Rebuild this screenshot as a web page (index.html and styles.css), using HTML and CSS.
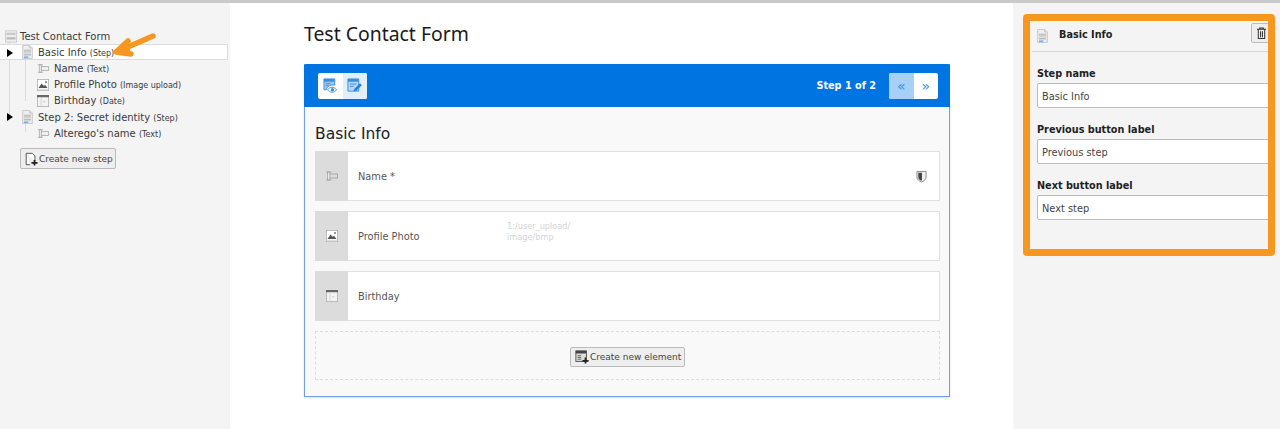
FILE: index.html
```html
<!DOCTYPE html>
<html lang="en">
<head>
<meta charset="utf-8">
<title>Test Contact Form</title>
<link rel="stylesheet" href="styles.css">
</head>
<body>
<svg width="0" height="0" class="defs">
  <defs>
    <symbol id="i-page" viewBox="0 0 12 16">
      <path d="M.5.5h8l3 3v12H.5z" fill="#eee" stroke="#c4c4c4"/>
      <path d="M8.500.5v3h3" fill="#ddd" stroke="#c4c4c4"/>
      <path d="M2 6h8M2 8h8" stroke="#aaa"/>
      <rect x="2" y="10" width="8" height="2" fill="#bbb"/>
      <rect x="2" y="13" width="5" height="2" fill="#7fb2ea"/>
    </symbol>
    <symbol id="i-form" viewBox="0 0 16 16">
      <rect x=".5" y=".5" width="15" height="15" fill="#eee" stroke="#c4c4c4"/>
      <rect x="2" y="3" width="12" height="3" fill="#c8c8c8"/>
      <rect x="2" y="9" width="12" height="3" fill="#bbb"/>
    </symbol>
    <symbol id="i-text" viewBox="0 0 16 12">
      <path d="M5.500 3.500h10v5h-10" fill="none" stroke="#999"/>
      <rect x="3" y="1" width="3" height="10" fill="#e8e8e8" stroke="#999" stroke-width=".8"/>
      <path d="M1 1h7M1 11h7" stroke="#999" stroke-width=".8"/>
    </symbol>
    <symbol id="i-image" viewBox="0 0 16 16">
      <rect x=".5" y=".5" width="15" height="15" fill="#fff" stroke="#aaa"/>
      <path d="M2 12l4-6 3 3 2-1 3 4z" fill="#555"/>
      <circle cx="12" cy="4" r="1.300" fill="#777"/>
      <rect x="1" y="13" width="14" height="2" fill="#ddd"/>
    </symbol>
    <symbol id="i-date" viewBox="0 0 16 16">
      <rect x=".5" y=".5" width="15" height="15" fill="#f2f2f2" stroke="#aaa"/>
      <rect x="0" y="0" width="16" height="3" fill="#666"/>
      <path d="M5.500 4v11" stroke="#ccc"/>
      <path d="M8 9h3" stroke="#bbb"/>
    </symbol>
    <symbol id="i-add" viewBox="0 0 16 16">
      <path d="M2.500 1.500h7l3 3v6M7 14.500H2.500v-13" fill="#fff" stroke="#444"/>
      <path d="M12 9v6.500M8.500 12.500H15.500" stroke="#222" stroke-width="2"/>
    </symbol>
    <symbol id="i-addel" viewBox="0 0 16 16">
      <rect x="1" y="1" width="12" height="12" fill="#ddd" stroke="#444"/>
      <rect x="1" y="1" width="12" height="3" fill="#444"/>
      <path d="M3 6.500h4M3 8.500h4M3 10.500h4" stroke="#555"/>
      <path d="M12 8.500v7M8.500 12.500h7" stroke="#222" stroke-width="2"/>
    </symbol>
    <symbol id="i-view" viewBox="0 0 16 16">
      <path d="M1 1h11.500v6.500H9C6 8 4 10 3.500 12.500H1z" fill="#9cc8f2" stroke="#3b8fe0"/>
      <rect x="1" y="1" width="11.500" height="3" fill="#3b8fe0"/>
      <path d="M3 6h5M3 8h3" stroke="#3b8fe0"/>
      <path d="M5 12.500c2-3.500 7-3.500 9.500 0-2.500 3.500-7.500 3.500-9.500 0z" fill="#fff" stroke="#3b8fe0"/>
      <circle cx="10" cy="12.500" r="1.800" fill="#3b8fe0"/>
    </symbol>
    <symbol id="i-edit" viewBox="0 0 16 16">
      <path d="M1 1h11.500v13H1z" fill="#b5d6f5" stroke="#3b8fe0"/>
      <rect x="1" y="1" width="11.500" height="3" fill="#3b8fe0"/>
      <path d="M3 6.500h7M3 9h4" stroke="#3b8fe0"/>
      <path d="M7 14.500l.8-2.800 6-6 2 2-6 6z" fill="#1f7fdc"/>
    </symbol>
  </defs>
</svg>

<div class="page">
  <aside class="tree">
    <div class="tree-list">
      <span class="line line-root"></span>
      <span class="line line-a"></span>
      <span class="line line-b"></span>
      <div class="node root"><svg class="ic ic-root"><use href="#i-form"/></svg><span>Test Contact Form</span></div>
      <div class="node step selected"><span class="tri"></span><svg class="ic ic-page"><use href="#i-page"/></svg><span>Basic Info <small>(Step)</small></span></div>
      <div class="node child"><svg class="ic ic-text"><use href="#i-text"/></svg><span>Name <small>(Text)</small></span></div>
      <div class="node child"><svg class="ic ic-box"><use href="#i-image"/></svg><span>Profile Photo <small>(Image upload)</small></span></div>
      <div class="node child"><svg class="ic ic-box"><use href="#i-date"/></svg><span>Birthday <small>(Date)</small></span></div>
      <div class="node step"><span class="tri"></span><svg class="ic ic-page"><use href="#i-page"/></svg><span>Step 2: Secret identity <small>(Step)</small></span></div>
      <div class="node child"><svg class="ic ic-text"><use href="#i-text"/></svg><span>Alterego's name <small>(Text)</small></span></div>
    </div>
    <button class="btn btn-step" type="button"><svg class="btn-ic"><use href="#i-add"/></svg>Create new step</button>
    <svg class="arrow" viewBox="0 0 48 30" width="48" height="30">
      <path d="M41 5L9 19" stroke="#f6981f" stroke-width="5.500" stroke-linecap="round" fill="none"/>
      <path d="M16 10L4 21l15 2" stroke="#f6981f" stroke-width="5.500" stroke-linecap="round" stroke-linejoin="round" fill="#f6981f"/>
    </svg>
  </aside>

  <main class="center">
    <h1 class="title">Test Contact Form</h1>
    <section class="card">
      <header class="card-head">
        <div class="group">
          <span class="gbtn"><svg class="gic"><use href="#i-view"/></svg></span>
          <span class="gbtn on"><svg class="gic"><use href="#i-edit"/></svg></span>
        </div>
        <div class="pager">
          <span class="step-count">Step 1 of 2</span>
          <div class="group">
            <span class="gbtn active">«</span>
            <span class="gbtn">»</span>
          </div>
        </div>
      </header>
      <div class="card-body">
        <h2 class="step-title">Basic Info</h2>
        <div class="row">
          <div class="row-ic"><svg class="ric-text"><use href="#i-text"/></svg></div>
          <div class="row-label">Name *</div>
          <svg class="shield" viewBox="0 0 12 14" width="11" height="13"><path d="M1 1.500h10v6c0 3-2.500 4.500-5 5.500-2.500-1-5-2.500-5-5.500z" fill="#eee" stroke="#888"/><path d="M2.500 3h4v8l-1 .5c-1.500-.7-3-2-3-4z" fill="#444"/></svg>
        </div>
        <div class="row">
          <div class="row-ic"><svg class="ric-box"><use href="#i-image"/></svg></div>
          <div class="row-label">Profile Photo</div>
          <div class="row-meta">1:/user_upload/<br>image/bmp</div>
        </div>
        <div class="row">
          <div class="row-ic"><svg class="ric-box"><use href="#i-date"/></svg></div>
          <div class="row-label">Birthday</div>
        </div>
        <div class="drop">
          <button class="btn btn-el" type="button"><svg class="btn-ic"><use href="#i-addel"/></svg>Create new element</button>
        </div>
      </div>
    </section>
  </main>

  <aside class="side">
    <div class="inspector">
      <div class="insp-head">
        <svg class="insp-ic"><use href="#i-page"/></svg>
        <strong class="insp-title">Basic Info</strong>
        <span class="trash"><svg viewBox="0 0 12 14" width="11" height="14"><path d="M1 3h10M4 3V1.500h4V3M2.500 3v10h7V3M5 5v6.500M7 5v6.500" fill="none" stroke="#333" stroke-width="1.100"/></svg></span>
      </div>
      <div class="fields">
        <label class="field"><span class="field-label">Step name</span><span class="input">Basic Info</span></label>
        <label class="field"><span class="field-label">Previous button label</span><span class="input">Previous step</span></label>
        <label class="field"><span class="field-label">Next button label</span><span class="input">Next step</span></label>
      </div>
    </div>
  </aside>
</div>
</body>
</html>
```
FILE: styles.css
```css
* { box-sizing: border-box; }
html, body { margin: 0; height: 100%; }
body {
  font-family: "DejaVu Sans", Verdana, sans-serif;
  font-size: 9.8px;
  color: #333;
  background: #fff;
  overflow: hidden;
}
.defs { position: absolute; }
.page {
  display: flex;
  height: 429px;
  border-top: 3px solid #c9c9c9;
}

/* tree */
.tree {
  position: relative;
  width: 230px;
  flex: none;
  background: #f4f4f4;
  padding-top: 25px;
  font-size: 10px;
}
.tree-list { position: relative; }
.node {
  position: relative;
  display: flex;
  align-items: center;
  height: 16.2px;
  white-space: nowrap;
  color: #3a3a3a;
}
.node small { font-size: 8px; }
.root { padding-left: 5px; }
.ic-root { width: 12px; height: 13px; margin-right: 3px; }
.step { padding-left: 22px; }
.selected {
  background: #fff;
  border: 1px solid #dcdcdc;
  border-left: 0;
  width: 228px;
}
.tri {
  position: absolute;
  left: 7px;
  top: 4px;
  border-left: 6px solid #000;
  border-top: 4px solid transparent;
  border-bottom: 4px solid transparent;
}
.ic-page { width: 11px; height: 14px; margin-right: 5px; }
.child { padding-left: 37px; }
.ic-text { width: 12px; height: 9px; margin-right: 5px; }
.ic-box { width: 12px; height: 12px; margin-right: 5px; }
.line { position: absolute; background: #dcdcdc; width: 1px; }
.line-root { left: 9px; top: 12px; height: 78px; }
.line-a { left: 25px; top: 30px; height: 43px; }
.line-b { left: 25px; top: 94px; height: 10px; }
.btn {
  display: inline-flex;
  align-items: center;
  height: 21px;
  font: 400 9px "DejaVu Sans", sans-serif;
  color: #444;
  background: #eee;
  border: 1px solid #bbb;
  border-radius: 2px;
  padding: 0 3px;
  white-space: nowrap;
}
.btn-ic { flex: none; width: 14px; height: 14px; margin-right: 1px; }
.btn-step { margin: 7px 0 0 20px; width: 96px; }
.arrow { position: absolute; left: 112px; top: 28px; }

/* center */
.center {
  width: 783px;
  flex: none;
  padding: 0 63px 0 74px;
}
.title {
  margin: 0;
  padding-top: 17px;
  height: 61px;
  font: 400 19.4px/27px "Noto Sans", "Open Sans", sans-serif;
  color: #1a1a1a;
}
.card {
  height: 333px;
  border: 1px solid #6f9fe6;
  border-top: 0;
  background: #f9f9f9;
  box-shadow: 0 1px 2px rgba(0,0,0,.12);
}
.card-head {
  display: flex;
  align-items: center;
  justify-content: space-between;
  height: 43px;
  margin: 0 -1px;
  padding: 0 12px 0 14px;
  background: #0074e0;
  border-radius: 2px 2px 0 0;
}
.group {
  display: flex;
  width: 49px;
  height: 26px;
  background: #fff;
  border-radius: 2px;
  overflow: hidden;
}
.gbtn {
  flex: 1;
  display: flex;
  align-items: center;
  justify-content: center;
  color: #3b8fe0;
  font-size: 14px;
  line-height: 1;
}
.gbtn.on { background: #e3eef8; }
.gbtn.active { background: #a6d0f5; }
.gic { width: 15px; height: 15px; }
.pager { display: flex; align-items: center; gap: 13px; }
.step-count { color: #fff; font-weight: 700; font-size: 9.7px; }
.card-body { padding: 17px 9px 0 10px; }
.step-title {
  margin: 0 0 7px;
  font: 400 15.500px/20px "DejaVu Sans", sans-serif;
  color: #222;
}
.row {
  position: relative;
  display: flex;
  align-items: center;
  height: 50px;
  margin-bottom: 10px;
  background: #fff;
  border: 1px solid #e0e0e0;
  border-left: 0;
}
.row-ic {
  width: 33px;
  align-self: stretch;
  margin: -1px 0;
  background: #dcdcdc;
  display: flex;
  align-items: center;
  justify-content: center;
}
.ric-text { width: 13px; height: 10px; }
.ric-box { width: 12px; height: 12px; }
.row-label { margin-left: 10px; color: #555; width: 149px; }
.row-meta { font-size: 8.2px; line-height: 10.500px; color: #d4d4d4; margin-top: -9px; }
.shield { margin-left: auto; margin-right: 12px; }
.drop {
  display: flex;
  align-items: center;
  justify-content: center;
  height: 49px;
  border: 1px dashed #dcdcdc;
}
.btn-el { height: 20px; width: 115px; background: #eee; padding-left: 4px; margin-top: 3px; }

/* inspector */
.side {
  flex: 1;
  background: #f4f4f4;
  padding: 11px 5px 0 10px;
}
.inspector {
  height: 242px;
  border: 7px solid #f6981f;
  border-radius: 4px;
  background: #f4f4f4;
  overflow: hidden;
}
.insp-head {
  display: flex;
  align-items: center;
  height: 31px;
  margin-left: 2px;
  border-bottom: 1px solid #d5d5d5;
  padding-left: 5px;
}
.insp-ic { width: 11px; height: 14px; margin-right: 11px; }
.insp-title { color: #222; font-size: 9.7px; margin-top: -3px; }
.trash {
  display: flex;
  align-items: center;
  justify-content: center;
  margin: -6px -3px 0 auto;
  width: 20px;
  height: 20px;
  border: 1px solid #bbb;
  border-radius: 2px 0 0 2px;
  background: #eee;
}
.fields { padding: 16px 0 0 7px; }
.field { display: block; margin-bottom: 16px; }
.field-label {
  display: block;
  font-weight: 700;
  font-size: 9.7px;
  color: #222;
  line-height: 12px;
  height: 15px;
}
.input {
  display: flex;
  align-items: center;
  height: 25px;
  margin-right: -6px;
  padding: 1px 0 0 4px;
  background: #fff;
  border: 1px solid #bbb;
  border-radius: 2px 0 0 2px;
  color: #444;
}
```
